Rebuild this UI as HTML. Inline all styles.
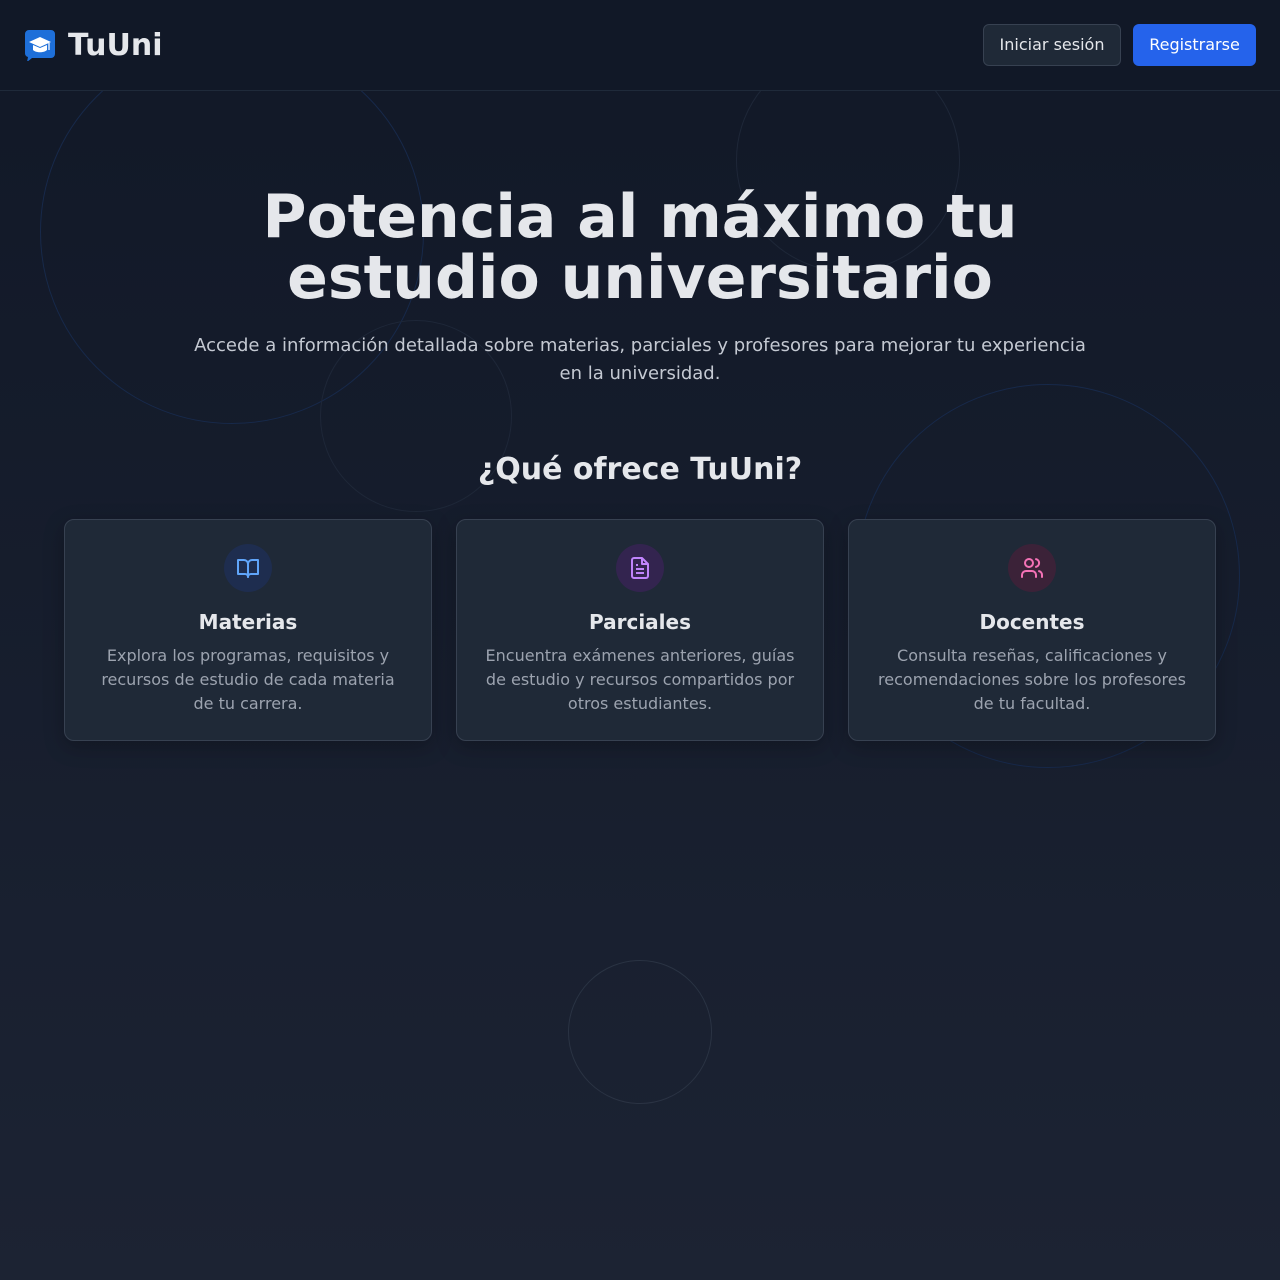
<!DOCTYPE html>
<html><head><meta charset="utf-8"><style>
*{box-sizing:border-box;margin:0;padding:0}
body{width:1280px;height:1280px;overflow:hidden;background:linear-gradient(#111827,#1c2333);font-family:"DejaVu Sans","Liberation Sans",sans-serif;color:#e5e7eb;position:relative}
.c{position:absolute;border-radius:50%;border:1px solid}
header{position:absolute;top:0;left:0;width:1280px;height:91px;border-bottom:1px solid #1f2a3a;background:#111827}
.logo{position:absolute;left:24px;top:29px;width:32px;height:32px}
.brand{position:absolute;left:68px;top:28px;font-size:30px;font-weight:bold;color:#e5e7eb}
.btn{position:absolute;top:24px;height:42px;border-radius:6px;font-size:16px;line-height:40px;text-align:center}
h1{position:absolute;top:187px;width:1280px;text-align:center;font-size:60px;line-height:61px;font-weight:bold;color:#e5e7eb}
.sub{position:absolute;top:332px;left:0;width:1280px;text-align:center;font-size:18px;line-height:28px;color:#c4c9d2}
h2{position:absolute;top:452px;width:1280px;text-align:center;font-size:30px;font-weight:bold}
.card{position:absolute;top:519px;width:368px;height:222px;background:#1f2937;border:1px solid #374151;border-radius:10px;text-align:center;box-shadow:0 6px 20px rgba(0,0,0,.25)}
.ic{width:48px;height:48px;border-radius:50%;margin:24px auto 0;display:flex;align-items:center;justify-content:center}
.card h3{font-size:20px;margin-top:18px;color:#e5e7eb}
.card p{font-size:16px;line-height:24px;color:#9ca3af;margin:10px 10px 0}
</style></head><body>
<div class="c" style="left:40px;top:40px;width:384px;height:384px;border-color:#17294a"></div>
<div class="c" style="left:736px;top:48px;width:224px;height:224px;border-color:#1e2738"></div>
<div class="c" style="left:320px;top:320px;width:192px;height:192px;border-color:#1e2738"></div>
<div class="c" style="left:856px;top:384px;width:384px;height:384px;border-color:#17294a"></div>
<div class="c" style="left:568px;top:960px;width:144px;height:144px;border-color:#2a3343"></div>
<header>
<svg class="logo" viewBox="0 0 32 32"><path d="M5 1h22a4 4 0 0 1 4 4v20a4 4 0 0 1-4 4H8l-5 4 1-5a4 4 0 0 1-3-4V5a4 4 0 0 1 4-4z" fill="#1e6fd9"/><path d="M16 8l11 5-11 5-11-5z" fill="#fff"/><path d="M9 16v5c3 3 11 3 14 0v-5l-7 3z" fill="#fff"/><path d="M25 14v7" stroke="#fff" stroke-width="1.3"/></svg>
<div class="brand">TuUni</div>
<div class="btn" style="left:983px;width:138px;background:#1f2937;border:1px solid #374151;color:#e5e7eb">Iniciar sesión</div>
<div class="btn" style="left:1133px;width:123px;background:#2563eb;color:#fff;line-height:42px">Registrarse</div>
</header>
<h1>Potencia al máximo tu<br>estudio universitario</h1>
<div class="sub">Accede a información detallada sobre materias, parciales y profesores para mejorar tu experiencia<br>en la universidad.</div>
<h2>¿Qué ofrece TuUni?</h2>
<div class="card" style="left:64px"><div class="ic" style="background:#1e2d4f"><svg width="24" height="24" viewBox="0 0 24 24" fill="none" stroke="#60a5fa" stroke-width="2" stroke-linejoin="round"><path d="M2 4h6a4 4 0 0 1 4 4v13a3 3 0 0 0-3-3H2z"/><path d="M22 4h-6a4 4 0 0 0-4 4v13a3 3 0 0 1 3-3h7z"/></svg></div><h3>Materias</h3><p>Explora los programas, requisitos y<br>recursos de estudio de cada materia<br>de tu carrera.</p></div>
<div class="card" style="left:456px"><div class="ic" style="background:#33244f"><svg width="24" height="24" viewBox="0 0 24 24" fill="none" stroke="#c084fc" stroke-width="2" stroke-linejoin="round"><path d="M14 2H6a2 2 0 0 0-2 2v16a2 2 0 0 0 2 2h12a2 2 0 0 0 2-2V8z"/><path d="M14 2v6h6M8 13h8M8 17h8M8 9h2"/></svg></div><h3>Parciales</h3><p>Encuentra exámenes anteriores, guías<br>de estudio y recursos compartidos por<br>otros estudiantes.</p></div>
<div class="card" style="left:848px"><div class="ic" style="background:#3b2238"><svg width="24" height="24" viewBox="0 0 24 24" fill="none" stroke="#f472b6" stroke-width="2" stroke-linecap="round"><path d="M16 21v-2a4 4 0 0 0-4-4H6a4 4 0 0 0-4 4v2"/><circle cx="9" cy="7" r="4"/><path d="M22 21v-2a4 4 0 0 0-3-3.9M16 3.1a4 4 0 0 1 0 7.8"/></svg></div><h3>Docentes</h3><p>Consulta reseñas, calificaciones y<br>recomendaciones sobre los profesores<br>de tu facultad.</p></div>
</body></html>
